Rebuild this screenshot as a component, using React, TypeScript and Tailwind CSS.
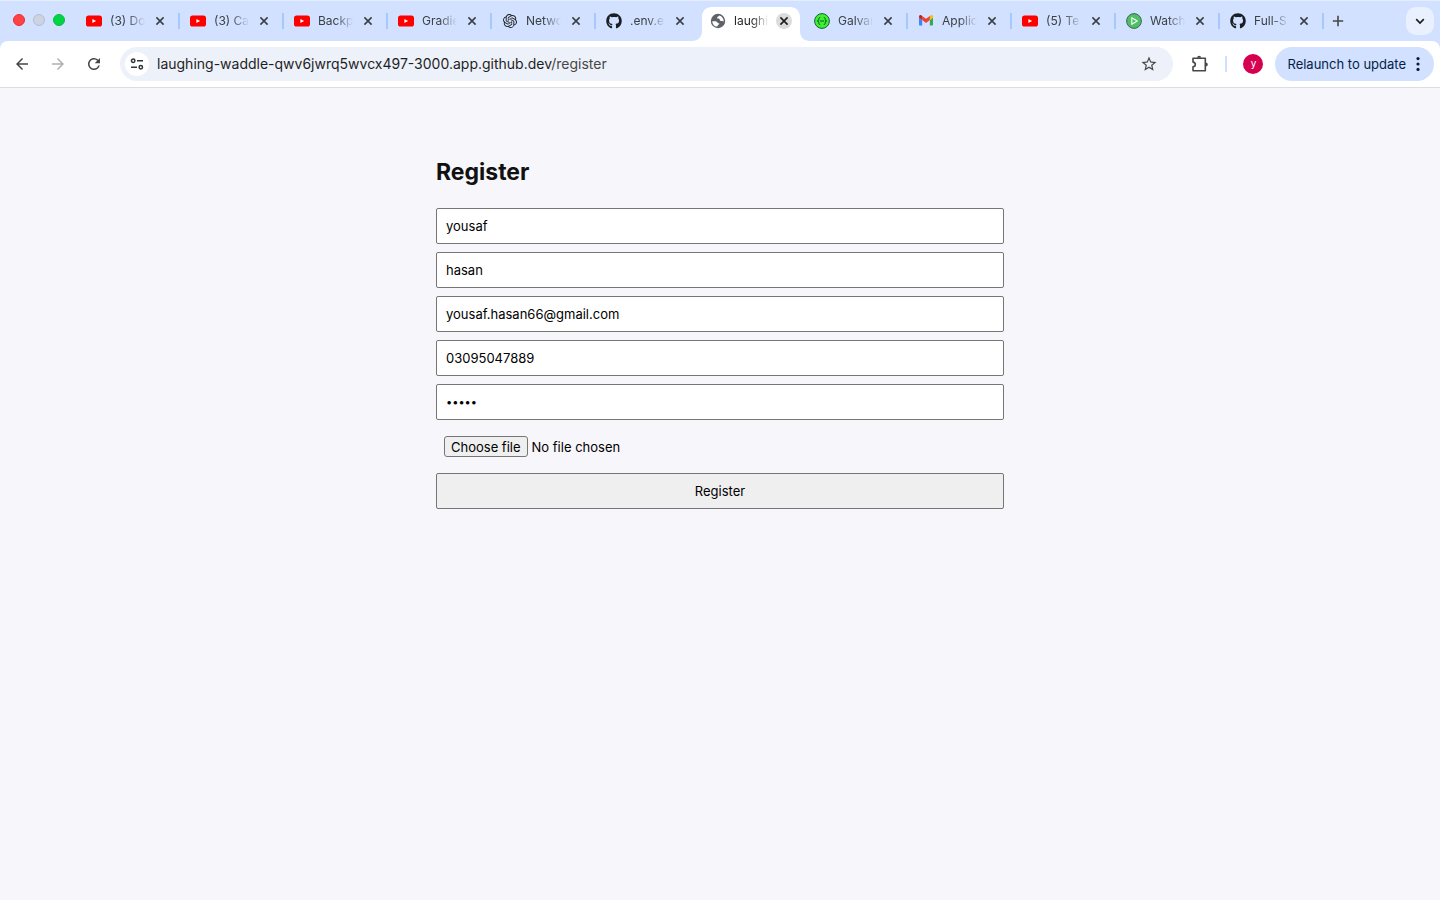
import type { FormEvent, ReactNode } from 'react';
import { MdArrowBack, MdArrowForward, MdRefresh, MdStarBorder } from 'react-icons/md';
import { FaGithub } from 'react-icons/fa';
import { SiOpenai } from 'react-icons/si';

function YouTubeIcon() {
  return (
    <svg viewBox="0 0 16 16" className="size-4">
      <rect x="0" y="2.4" width="16" height="11.2" rx="2.6" fill="#ff0000" />
      <path d="M6.4 5.9v4.2L10.1 8z" fill="#fff" />
    </svg>
  );
}

function GlobeIcon() {
  return (
    <svg viewBox="0 0 16 16" className="size-4">
      <circle cx="8" cy="8" r="7.2" fill="#5f6368" />
      <path
        d="M9.2 2.500c-.2.9-.9 1-1.500 1.300-.7.400-.8 1.300-.2 1.700.6.300 1.500.1 2 .6.400.5.200 1.300.8 1.700.7.400 1.500 0 2.200.3.400.2.700.5 1.200.4.100-2.900-1.700-5.200-4.500-6z"
        fill="#fff"
      />
      <path
        d="M2.300 8.200c1.500 0 2.900-.1 4 .2.900.3 1 1.300 1.700 1.500.6.200 1.300.2 1.300.9 0 .7-.9.900-1.300 1.300-.4.400-.2 1.100-.8 1.500C4.400 13.400 2.300 11.200 2.300 8.200z"
        fill="#fff"
      />
    </svg>
  );
}

function BracesIcon() {
  return (
    <svg viewBox="0 0 16 16" className="size-4">
      <circle cx="8" cy="8" r="7.4" fill="#3df12f" stroke="#1c5a4a" strokeWidth="1" />
      <g fill="none" stroke="#14532d" strokeWidth="1">
        <path d="M6.200 4.500c-1.300 0-1.400.6-1.400 1.500 0 1.200-.2 2-1.500 2 1.300 0 1.500.8 1.500 2 0 .9.1 1.500 1.400 1.500" />
        <path d="M9.800 4.500c1.300 0 1.400.6 1.400 1.500 0 1.200.2 2 1.500 2-1.300 0-1.500.8-1.500 2 0 .9-.1 1.500-1.400 1.500" />
        <path d="M6 8h4" />
      </g>
    </svg>
  );
}

function GmailIcon() {
  return (
    <svg viewBox="52 42 88 66" className="w-4 px-px">
      <path fill="#4285f4" d="M58 108h14V74L52 59v43c0 3.320 2.690 6 6 6" />
      <path fill="#34a853" d="M120 108h14c3.320 0 6-2.690 6-6V59l-20 15" />
      <path fill="#fbbc04" d="M120 48v26l20-15v-8c0-7.420-8.470-11.650-14.400-7.200" />
      <path fill="#ea4335" d="M72 74V48l24 18 24-18v26L96 92" />
      <path fill="#c5221f" d="M52 51v8l20 15V48l-5.600-4.200c-5.940-4.450-14.400-.22-14.400 7.200" />
    </svg>
  );
}

function PlayIcon() {
  return (
    <svg viewBox="0 0 16 16" className="size-4">
      <circle cx="8" cy="8" r="7.400" fill="#4fbf67" stroke="#3d6b52" strokeWidth="1" />
      <path d="M5.800 4.700v6.600L11.300 8z" fill="#4fbf67" stroke="#f3fff5" strokeWidth="1.200" strokeLinejoin="round" />
    </svg>
  );
}

function SiteSettingsIcon() {
  return (
    <svg viewBox="0 0 16 16" className="size-4" fill="none" stroke="#30343a" strokeWidth="1.500">
      <circle cx="4.200" cy="4.800" r="1.700" />
      <path d="M8 4.800h6M2 11.200h6" />
      <circle cx="11.800" cy="11.200" r="1.700" />
    </svg>
  );
}

function ExtensionsIcon() {
  return (
    <svg viewBox="0 0 18 18" className="size-[18px]">
      <path
        d="M2 3.200h12.300v12.500H2v-3.800c1.500-.2 2.300-1.200 2.300-2.400S3.500 7.300 2 7.100z"
        fill="none"
        stroke="#474747"
        strokeWidth="1.600"
        strokeLinejoin="round"
      />
      <path d="M6.100 2.800a2 2 0 0 1 4 0zM14.800 7.500a2 2 0 0 1 0 4z" fill="#474747" />
    </svg>
  );
}

function CloseIcon() {
  return (
    <svg viewBox="0 0 16 16" className="size-4" stroke="currentColor" strokeWidth="1.600">
      <path d="M4.400 4.400l7.200 7.200M11.600 4.400l-7.200 7.200" />
    </svg>
  );
}

const github = <FaGithub className="size-4 text-[#1b1f23]" />;

const tabs: { title: string; icon: ReactNode; active?: boolean; divider?: boolean }[] = [
  { title: '(3) Do', icon: <YouTubeIcon />, divider: true },
  { title: '(3) Ca', icon: <YouTubeIcon />, divider: true },
  { title: 'Backp', icon: <YouTubeIcon />, divider: true },
  { title: 'Gradie', icon: <YouTubeIcon />, divider: true },
  { title: 'Netwo', icon: <SiOpenai className="size-[14px] text-[#202123]" />, divider: true },
  { title: '.env.e', icon: github },
  { title: 'laughi', icon: <GlobeIcon />, active: true },
  { title: 'Galvan', icon: <BracesIcon />, divider: true },
  { title: 'Applic', icon: <GmailIcon />, divider: true },
  { title: '(5) Te', icon: <YouTubeIcon />, divider: true },
  { title: 'Watch', icon: <PlayIcon />, divider: true },
  { title: 'Full-S', icon: github, divider: true },
];

function TabStrip() {
  return (
    <div className="flex h-[41px] items-stretch border-t border-[#e4edfd] bg-[#d1e1ff] pr-1.5">
      <div className="flex w-[76px] shrink-0 items-center gap-2 pb-0.5 pl-[13px]">
        <span className="size-3 rounded-full border border-[#f02a30] bg-[#ff4245]" />
        <span className="size-3 rounded-full border border-[#b6bdcd] bg-[#ccd3e2]" />
        <span className="size-3 rounded-full border border-[#0fba3a] bg-[#00d545]" />
      </div>
      <nav aria-label="Tabs" className="flex min-w-0">
        {tabs.map((tab, i) => (
          <div key={i} className="relative flex w-[104px] min-w-0 items-center pb-px pl-2.5">
            {tab.active && (
              <svg
                viewBox="0 0 118 34"
                preserveAspectRatio="none"
                className="absolute bottom-0 -left-2 h-[34px] w-[118px] max-w-none"
              >
                <path d="M0 34c6 0 10-4 10-10V10C10 4 14 0 20 0h78c6 0 10 4 10 10v14c0 6 4 10 10 10z" fill="#fff" />
              </svg>
            )}
            <a href="#tab" className="relative flex min-w-0 items-center gap-2">
              <span className="flex w-4 shrink-0 justify-center">{tab.icon}</span>
              <span
                className={`w-[35px] overflow-hidden text-xs whitespace-nowrap mask-r-from-50% mask-r-to-100% ${
                  tab.active ? 'text-[#1f1f1f]' : 'text-[#3c4043]'
                }`}
              >
                {tab.title}
              </span>
            </a>
            <button
              type="button"
              aria-label={`Close ${tab.title}`}
              className={`relative ml-[7px] size-4 shrink-0 rounded-full ${
                tab.active ? 'bg-[#dcdcdc] text-[#1f1f1f]' : 'text-[#3c4043]'
              }`}
            >
              <CloseIcon />
            </button>
            {tab.divider && <span className="ml-2.5 h-4 w-0.5 shrink-0 bg-[#a8c7fa]" />}
          </div>
        ))}
      </nav>
      <button type="button" aria-label="New tab" className="ml-2 flex shrink-0 items-center pb-px text-[#474747]">
        <svg viewBox="0 0 12 12" className="size-3" stroke="currentColor" strokeWidth="1.600">
          <path d="M6 .8v10.400M.8 6h10.400" />
        </svg>
      </button>
      <button
        type="button"
        aria-label="Search tabs"
        className="mt-1.5 ml-auto flex size-7 shrink-0 items-center justify-center rounded-[10px] bg-[#e9f1fe] text-[#1f1f1f]"
      >
        <svg viewBox="0 0 10 10" className="size-2.5" fill="none" stroke="currentColor" strokeWidth="1.700">
          <path d="M1.200 3.200L5 7l3.800-3.800" />
        </svg>
      </button>
    </div>
  );
}

function Toolbar() {
  return (
    <div className="bg-[#d1e1ff]">
      <div className="flex h-[47px] items-center rounded-t-lg border-b border-[#dcdde2] bg-white pr-1.5 pl-[13px] text-[#474747]">
        <div className="flex gap-[18px]">
          <button type="button" aria-label="Back">
            <MdArrowBack className="size-[18px]" />
          </button>
          <button type="button" aria-label="Forward" className="text-[#b0b0b0]">
            <MdArrowForward className="size-[18px]" />
          </button>
          <button type="button" aria-label="Reload">
            <MdRefresh className="size-[18px]" />
          </button>
        </div>
        <div className="ml-[17px] flex h-[34px] min-w-0 flex-1 items-center rounded-full bg-[#edf1fa] pr-[15px] pl-[5px]">
          <button
            type="button"
            aria-label="View site information"
            className="flex size-6 shrink-0 items-center justify-center rounded-full bg-white"
          >
            <SiteSettingsIcon />
          </button>
          <a href="#register" className="ml-2 flex-1 truncate text-sm text-[#1f1f1f]">
            laughing-waddle-qwv6jwrq5wvcx497-3000.app.github.dev<span className="text-[#474747]">/register</span>
          </a>
          <button type="button" aria-label="Bookmark this page">
            <MdStarBorder className="size-[18px]" />
          </button>
        </div>
        <button type="button" aria-label="Extensions" className="ml-[18px]">
          <ExtensionsIcon />
        </button>
        <span className="ml-4 h-4 w-0.5 bg-[#cfe0fd]" />
        <button
          type="button"
          aria-label="Profile"
          className="ml-4 flex size-5 items-center justify-center rounded-full bg-[#d5004f] pb-0.5 text-[10px] text-white"
        >
          y
        </button>
        <button
          type="button"
          className="ml-3 flex h-[34px] items-center gap-2.5 rounded-full bg-[#d1e1ff] pr-3.5 pl-3 text-[13px] leading-5 whitespace-nowrap text-[#041e49]"
        >
          Relaunch to update
          <svg viewBox="0 0 4 14" className="h-3.5 w-1" fill="currentColor">
            <circle cx="2" cy="1.600" r="1.600" />
            <circle cx="2" cy="7" r="1.600" />
            <circle cx="2" cy="12.400" r="1.600" />
          </svg>
        </button>
      </div>
    </div>
  );
}

const fields = [
  { name: 'firstName', label: 'First name', type: 'text', value: 'yousaf' },
  { name: 'lastName', label: 'Last name', type: 'text', value: 'hasan' },
  { name: 'email', label: 'Email', type: 'email', value: 'yousaf.hasan66@gmail.com' },
  { name: 'phone', label: 'Phone', type: 'tel', value: '03095047889' },
  { name: 'password', label: 'Password', type: 'password', value: '12345' },
];

function RegisterForm() {
  const onSubmit = (event: FormEvent) => event.preventDefault();
  return (
    <main className="mx-auto w-full max-w-[600px] px-4 pt-[68px] text-[13px] leading-5">
      <h2 className="mb-5 text-[23px] leading-8 font-bold text-[#111]">Register</h2>
      <form onSubmit={onSubmit} className="flex flex-col gap-2 text-black">
        {fields.map((field) => (
          <input
            key={field.name}
            name={field.name}
            aria-label={field.label}
            type={field.type}
            defaultValue={field.value}
            className={`h-9 w-full rounded-xs border border-[#767676] bg-white px-[9px] ${
              field.type === 'password' ? 'text-[11px]' : ''
            }`}
          />
        ))}
        <label className="relative flex items-center gap-1 p-2">
          <span className="flex h-[21px] items-center rounded-[3px] border border-[#767676] bg-[#efefef] px-1.5">
            Choose file
          </span>
          <span>No file chosen</span>
          <input type="file" name="avatar" className="absolute inset-0 w-full opacity-0" />
        </label>
        <button type="submit" className="h-9 rounded-xs border border-[#767676] bg-[#efefef]">
          Register
        </button>
      </form>
    </main>
  );
}

export default function App() {
  return (
    <div className="min-h-screen bg-[#f7f6fb] font-['Inter','Liberation_Sans',sans-serif]">
      <header>
        <TabStrip />
        <Toolbar />
      </header>
      <RegisterForm />
    </div>
  );
}
